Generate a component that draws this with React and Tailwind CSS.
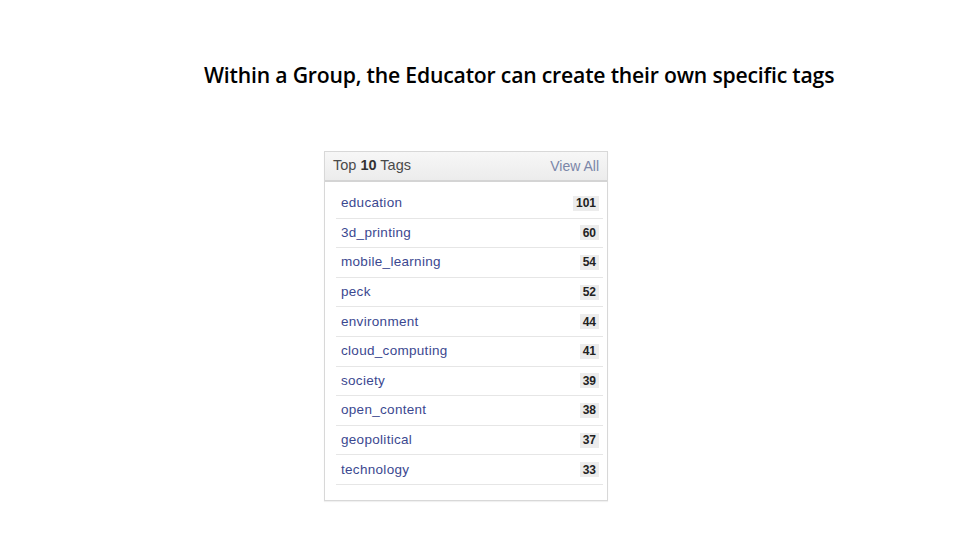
import React from 'react';

const tags = [
    ['education', 101],
    ['3d_printing', 60],
    ['mobile_learning', 54],
    ['peck', 52],
    ['environment', 44],
    ['cloud_computing', 41],
    ['society', 39],
    ['open_content', 38],
    ['geopolitical', 37],
    ['technology', 33],
];

const App = () => {
    return (
        <div className="w-[960px] h-[540px] bg-white flex flex-col items-start">
            <h1 className="mt-[60px] ml-[204px] text-[21.2px] leading-[30px] font-semibold text-black tracking-[-0.2px] font-['Open_Sans',sans-serif]">
                Within a Group, the Educator can create their own specific tags
            </h1>

            <div className="mt-[61px] ml-[324px] w-[284px] h-[350px] border border-[#d8d8d8] bg-white font-['Liberation_Sans',Arial,sans-serif] shadow-[0_1px_1px_rgba(0,0,0,0.06)]">
                <div className="h-[30px] flex items-center justify-between pl-[8px] pr-[8px] bg-gradient-to-b from-[#f7f7f7] to-[#ececec] border-b-2 border-[#d4d4d4]">
                    <span className="text-[14.5px] text-[#4a4a4a]">
                        Top <span className="font-bold text-[#333]">10</span> Tags
                    </span>
                    <span className="text-[14px] text-[#7b86a8]">View All</span>
                </div>

                <div className="pl-[11px] pr-[4px] pt-[7px]">
                    {tags.map(([name, count]) => (
                        <div
                            key={name}
                            className="h-[29.6px] flex items-center justify-between pl-[5px] pr-[4px] border-b border-[#e6e6e6]"
                        >
                            <span className="text-[13.5px] text-[#3b4890] tracking-[0.3px]">{name}</span>
                            <span className="bg-[#ececec] px-[3px] h-[15px] flex items-center text-[12px] font-bold text-[#222]">
                                {count}
                            </span>
                        </div>
                    ))}
                </div>
            </div>
        </div>
    );
};

export default App;
